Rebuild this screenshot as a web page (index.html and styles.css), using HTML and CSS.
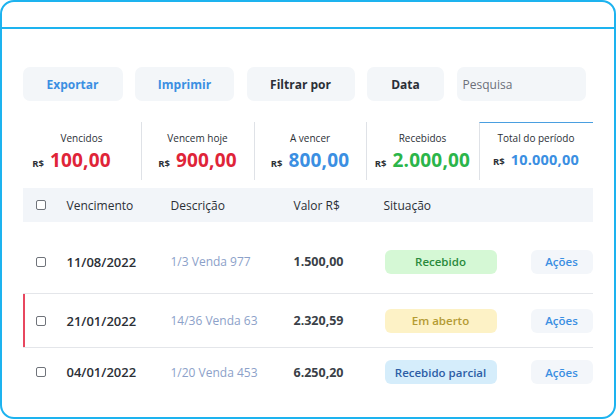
FILE: index.html
```html
<!DOCTYPE html>
<html lang="pt-BR">
<head>
<meta charset="utf-8">
<title>Contas a receber</title>
<link rel="stylesheet" href="styles.css">
</head>
<body>
<div class="frame">
  <div class="topbar"></div>
  <div class="content">
    <div class="toolbar">
      <button class="btn btn-blue w-export">Exportar</button>
      <button class="btn btn-blue w-print">Imprimir</button>
      <button class="btn btn-dark w-filter">Filtrar por</button>
      <button class="btn btn-dark w-data">Data</button>
      <div class="search">Pesquisa</div>
    </div>

    <div class="cards">
      <div class="card first-card">
        <div class="card-label">Vencidos</div>
        <div class="card-value"><span class="cur">R$</span><span class="num red">100,00</span></div>
      </div>
      <div class="card sep">
        <div class="card-label">Vencem hoje</div>
        <div class="card-value"><span class="cur">R$</span><span class="num red">900,00</span></div>
      </div>
      <div class="card sep">
        <div class="card-label">A vencer</div>
        <div class="card-value"><span class="cur">R$</span><span class="num blue">800,00</span></div>
      </div>
      <div class="card sep">
        <div class="card-label">Recebidos</div>
        <div class="card-value"><span class="cur">R$</span><span class="num green">2.000,00</span></div>
      </div>
      <div class="card sep active">
        <div class="card-label">Total do período</div>
        <div class="card-value"><span class="cur">R$</span><span class="num blue small">10.000,00</span></div>
      </div>
    </div>

    <div class="table">
      <div class="row head">
        <div class="cell"><span class="check"></span></div>
        <div class="cell">Vencimento</div>
        <div class="cell">Descrição</div>
        <div class="cell">Valor R$</div>
        <div class="cell">Situação</div>
        <div class="cell"></div>
      </div>
      <div class="row body first">
        <div class="cell"><span class="check"></span></div>
        <div class="cell date">11/08/2022</div>
        <div class="cell desc">1/3 Venda 977</div>
        <div class="cell val">1.500,00</div>
        <div class="cell"><span class="badge ok">Recebido</span></div>
        <div class="cell"><span class="acoes">Ações</span></div>
      </div>
      <div class="row body late">
        <div class="cell"><span class="check"></span></div>
        <div class="cell date">21/01/2022</div>
        <div class="cell desc">14/36 Venda 63</div>
        <div class="cell val">2.320,59</div>
        <div class="cell"><span class="badge open">Em aberto</span></div>
        <div class="cell"><span class="acoes">Ações</span></div>
      </div>
      <div class="row body last">
        <div class="cell"><span class="check"></span></div>
        <div class="cell date">04/01/2022</div>
        <div class="cell desc">1/20 Venda 453</div>
        <div class="cell val">6.250,20</div>
        <div class="cell"><span class="badge partial">Recebido parcial</span></div>
        <div class="cell"><span class="acoes">Ações</span></div>
      </div>
    </div>
  </div>
</div>
</body>
</html>
```

FILE: styles.css
```css
* { box-sizing: border-box; }
html, body { margin: 0; padding: 0; background: #ffffff; }
body {
  font-family: "Open Sans", "Noto Sans", sans-serif;
  color: #2b2f36;
  width: 616px;
  height: 419px;
  overflow: hidden;
}
.frame {
  width: 616px;
  height: 419px;
  border: 2.5px solid #1db3ef;
  border-radius: 14px;
  overflow: hidden;
  background: #fff;
}
.topbar {
  height: 27px;
  border-bottom: 2.5px solid #1db3ef;
}
.content {
  padding-left: 20.5px;
  width: 590.5px;
}
.toolbar {
  display: flex;
  margin-top: 38px;
  height: 34px;
}
.btn {
  height: 34px;
  border: none;
  border-radius: 7px;
  background: #f3f6f9;
  font-family: inherit;
  font-size: 12px;
  font-weight: 700;
  padding: 0;
  margin-right: 12.5px;
}
.btn-blue { color: #3b8fe2; }
.btn-dark { color: #2b2f36; }
.w-export { width: 100px; }
.w-print { width: 99px; }
.w-filter { width: 108px; }
.w-data { width: 77px; }
.search {
  width: 129px;
  height: 34px;
  border-radius: 7px;
  background: #f3f6f9;
  color: #6b7079;
  font-size: 12px;
  display: flex;
  align-items: center;
  padding-left: 6px;
}

.cards {
  display: grid;
  grid-template-columns: 118px 113px 112px 113px 114px;
  margin-top: 21px;
  height: 58px;
}
.card {
  display: flex;
  flex-direction: column;
  align-items: center;
  padding-top: 9px;
}
.card.sep { border-left: 1px solid #dfe2e7; }
.card.active { border-top: 1.5px solid #4a9fe0; padding-top: 7.5px; }
.card-label {
  font-size: 10px;
  color: #2b2f36;
  line-height: 14px;
}
.card-value {
  display: flex;
  align-items: baseline;
  margin-top: 3px;
  line-height: 24px;
}
.first-card .card-value { padding-right: 20px; }
.cur {
  font-size: 9.5px;
  font-weight: 700;
  color: #2b2f36;
  margin-right: 6px;
}
.num { font-size: 19px; font-weight: 700; letter-spacing: 0.2px; }
.num.small { font-size: 14.5px; }
.red { color: #df2438; }
.blue { color: #3b8fe2; }
.green { color: #2bb54a; }

.table {
  margin-top: 8px;
  width: 570px;
}
.row {
  display: grid;
  grid-template-columns: 44px 104px 123px 90px 147px 62px;
  align-items: center;
}
.row.head {
  height: 34px;
  background: #f2f5f9;
  font-size: 12px;
  color: #2b2f36;
}
.cell { display: flex; align-items: center; white-space: nowrap; }
.row .cell:first-child { padding-left: 13px; }
.check {
  width: 10px;
  height: 10px;
  border: 1.3px solid #6f737a;
  border-radius: 2px;
  background: #fff;
}
.row.body { border-bottom: 1.5px solid #e4e6ea; }
.row.first { height: 72px; padding-top: 8px; }
.row.late { height: 54px; box-shadow: inset 2px 0 0 #e8475f; }
.row.last { height: 52px; padding-bottom: 4px; border-bottom: none; }
.date { font-size: 13px; font-weight: 600; color: #2b2f36; }
.desc { font-size: 12px; color: #8ca1c9; }
.val { font-size: 12.5px; font-weight: 700; color: #3a3f47; }
.badge {
  width: 112px;
  height: 24px;
  border-radius: 6px;
  display: flex;
  align-items: center;
  justify-content: center;
  font-size: 11.5px;
  font-weight: 600;
  margin-left: 1px;
}
.badge.ok { background: #d5f8d5; color: #2a8b3c; }
.badge.open { background: #fdf2c6; color: #b49b34; }
.badge.partial { background: #d5edfb; color: #2d5ea6; }
.acoes {
  width: 62px;
  height: 24px;
  border-radius: 6px;
  background: #f3f6fa;
  color: #3b8fe2;
  font-size: 11.5px;
  font-weight: 600;
  display: flex;
  align-items: center;
  justify-content: center;
}
```
